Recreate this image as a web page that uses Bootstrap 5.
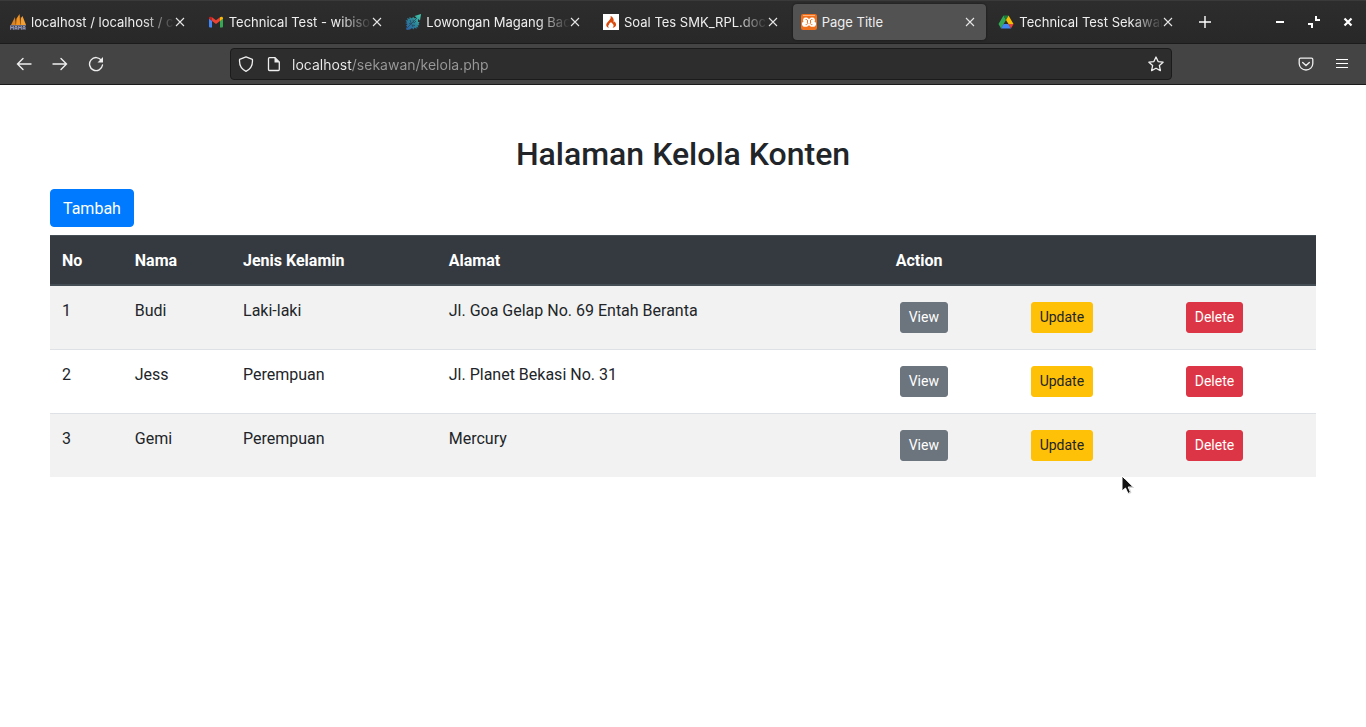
<!DOCTYPE html>
<html lang="id">
<head>
<meta charset="utf-8">
<meta name="viewport" content="width=device-width, initial-scale=1">
<title>Page Title</title>
<link href="https://cdn.jsdelivr.net/npm/bootstrap@5.3.0/dist/css/bootstrap.min.css" rel="stylesheet">
<style>
  body { font-family: Roboto, sans-serif; color: #212529; }
  .browser { font-family: Inter, sans-serif; color: #eee; }
  .browser svg { display: block; flex: none; }
  .browser button { background: none; border: 0; padding: 0; color: inherit; }

  .tab-strip { height: 44px; padding-left: 2px; background: linear-gradient(#2d2d2d, #282828); border-top: 1px solid #3a3a3a; border-bottom: 1px solid #1c1c1c; }
  .tab-list { gap: 4px; min-width: 0; }
  .browser-tab { flex: 1 1 0; min-width: 0; height: 36px; padding: 0 11px 0 8px; border-radius: 4px; }
  .browser-tab.active { background: #525252; box-shadow: 0 0 2px #111; }
  .tab-title { font-size: 13px; line-height: 20px; margin-left: 5px; color: #eee; text-decoration: none; overflow: hidden; white-space: nowrap; }
  .tab-fade { -webkit-mask-image: linear-gradient(to left, transparent, #000 32px); mask-image: linear-gradient(to left, transparent, #000 32px); }
  .strip-end { width: 182px; padding: 0 12px 0 15px; }
  .window-controls { gap: 22px; }

  .toolbar { height: 41px; background: #444; border-bottom: 1px solid #1a1a1a; }
  .nav-tools { flex: 0 0 230px; gap: 20px; padding-left: 16px; }
  .menu-tools { flex: 0 0 194px; gap: 20px; padding-right: 16px; }
  .url-bar { height: 32px; padding: 0 7px; gap: 10px; background: #2d2d2d; border: 1px solid #1b1b1b; border-radius: 4px; }
  .url-icons { gap: 12px; }
  .url-bar input { border: 0; padding: 2px 0 0; outline: 0; font-size: 14px; line-height: 20px; color: transparent;
    background: linear-gradient(to right, #eee 60px, #999 60px); -webkit-background-clip: text; background-clip: text; }

  .page-body { padding: 50px; }
  .page-heading { font-size: 32px; line-height: 38px; margin-bottom: 16px; }
  .btn { --bs-btn-border-radius: 4px; }
  .btn-sm { --bs-btn-border-radius: 3px; --bs-btn-font-size: 14px; }
  .btn-primary { --bs-btn-bg: #007bff; --bs-btn-border-color: #007bff; padding-top: 7px; padding-bottom: 5px; }
  .btn-warning { --bs-btn-color: #212529; }
  .people { table-layout: fixed; color: #212529; }
  .people > :not(caption) > * > * { padding: 13px 12px 11px; border-width: 1px 0 0; border-top: 1px solid #dee2e6; }
  .people > thead > tr > th { color: #fff; background: #343a40; border-top: 1px solid #454d55; border-bottom: 2px solid #454d55; }
  .people > tbody > tr:nth-of-type(odd) > td { --bs-table-accent-bg: #f2f2f2; color: #212529; }
  .people > tbody > tr > .act { padding: 16px 0 16px 16px; }
  .people .act .btn { display: block; width: max-content; }
  .w-no { width: 5.75%; } .w-name { width: 8.55%; } .w-sex { width: 16.25%; } .w-address { width: 35.3%; }
  .w-view { width: 10.35%; } .w-update { width: 12.25%; } .w-delete { width: 11.55%; }
  .pointer { left: 1121px; top: 475px; }
</style>
</head>
<body>
<svg class="d-none">
  <symbol id="x" viewBox="0 0 10 10"><path d="M1 1l8 8M9 1l-8 8" stroke="#e6e6e6" stroke-width="1.1"/></symbol>
</svg>

<header class="browser">
  <div class="tab-strip d-flex align-items-center">
    <nav class="tab-list d-flex flex-grow-1" aria-label="Tabs">
      <div class="browser-tab d-flex align-items-center">
        <svg width="16" height="16" viewBox="0 0 16 16"><path d="M1 11L5 3l.6 8z" fill="#d98325"/><path d="M5.200 11L6 5.500 9.500 0l1.300 11z" fill="#f29221"/><path d="M10.500 11L11 4l1.500-2L16 11z" fill="#f5a033"/><path d="M5.600 10.500L6.500 5M10.700 10.500L10 3" stroke="#8b5418" stroke-width=".7"/><path d="M.7 15.800v-3.600l1.300 2 1.300-2v3.600M5 15.800v-3.200h2v3.200M5 14.300h2M8.700 15.800v-3.600l1.300 2 1.300-2v3.600M13 15.800v-3.200h2v3.200M13 14.300h2" fill="none" stroke="#9a9fc4" stroke-width="1"/><path d="M0 11.500h16" stroke="#777b96" stroke-width=".8"/></svg>
        <a href="#" class="tab-title tab-fade flex-grow-1">localhost / localhost / crud</a>
        <button aria-label="Close tab"><svg width="10" height="10"><use href="#x"/></svg></button>
      </div>
      <div class="browser-tab d-flex align-items-center">
        <svg width="16" height="16" viewBox="0 0 16 16"><path d="M1 4.500l3 2V13.500H2a1 1 0 0 1-1-1z" fill="#4285f4"/><path d="M12 6.500l3-2v8a1 1 0 0 1-1 1h-2z" fill="#34a853"/><path d="M4 3.300l4 3 4-3v3.700l-4 3-4-3z" fill="#ea4335"/><path d="M1 4.200c0-1.600 1.700-2 3-.9V7L1 4.800z" fill="#c5221f"/><path d="M15 4.200c0-1.600-1.700-2-3-.9V7l3-2.200z" fill="#fbbc04"/></svg>
        <a href="#" class="tab-title tab-fade flex-grow-1">Technical Test - wibisono</a>
        <button aria-label="Close tab"><svg width="10" height="10"><use href="#x"/></svg></button>
      </div>
      <div class="browser-tab d-flex align-items-center">
        <svg width="16" height="16" viewBox="0 0 16 16"><defs><linearGradient id="teal" x1="1" y1="0" x2="0" y2="1"><stop offset="0" stop-color="#45d0ae"/><stop offset=".5" stop-color="#2b8599"/><stop offset="1" stop-color="#2c5aa5"/></linearGradient></defs><path d="M16 0l-1 6.500-2-1.500v3h1.500l-1 2 1 1-2 .5 1 2-2-.5V15l-2-1.500-1 2-1.500-1.500-2 1.500-3 .5-1-1 1-2.500-1-1 1.500-1.500L0 9l2-.5L.5 6 3 6.500 2 4l2.500 1V3L7 4.500 8 3l2 1.500 1.500-1L9.500 2z" fill="url(#teal)"/><path d="M2 14L12 4M5 6l1.500 4M8 5.500l.5 3M4 9.500l3 .5M7 11l3 .5M8 13l-1-2M11 7l-2 2" stroke="#28485a" stroke-width=".8"/></svg>
        <a href="#" class="tab-title tab-fade flex-grow-1">Lowongan Magang Backend</a>
        <button aria-label="Close tab"><svg width="10" height="10"><use href="#x"/></svg></button>
      </div>
      <div class="browser-tab d-flex align-items-center">
        <svg width="16" height="16" viewBox="0 0 16 16"><path fill="#fff" d="M0 0h16v16H0z"/><path d="M7.500 2c.6 2-.1 3.200-1.600 4.700C4.300 8.300 3 9.500 3.300 11.400c.2 1.200 1.200 2 2.700 2.300-1.100-1-1-2.300.1-3.200 0-.9.900-1.500 2-2.500 0 1.200 2.700 1.900 2.500 3.600 0 .8-.4 1.500-1 2.100 1.900-.3 3.600-1.600 3.500-3.300-.1-1.600-1.300-2.200-1.600-3.200-.4.500-.3.900-.5 1.300-.5-.2-.5-1-.3-1.700C10.800 4.600 9.900 3 7.500 2z" fill="#d8490b"/></svg>
        <a href="#" class="tab-title tab-fade flex-grow-1">Soal Tes SMK_RPL.docx</a>
        <button aria-label="Close tab"><svg width="10" height="10"><use href="#x"/></svg></button>
      </div>
      <div class="browser-tab active d-flex align-items-center">
        <svg width="16" height="16" viewBox="0 0 16 16"><rect width="16" height="16" rx="2" fill="#f0701c"/><path d="M2 1.500h12" stroke="#ffc193" stroke-width=".8"/><path d="M4.500 3.500h1.500l2 1.500 2-1.500h1.500a2.500 2.500 0 0 1 2 4 2.800 2.800 0 0 1-2 5.200H10l-2-1.500-2 1.500H4.500a2.800 2.800 0 0 1-2-5.200 2.500 2.500 0 0 1 2-4z" fill="#fff"/><path d="M4.600 5.500h1L7 7 6 8l1 1.200-1.400 1.500h-1M11.400 5.500h-1L9 7l1 1-1 1.200 1.400 1.500h1" fill="none" stroke="#f0701c" stroke-width="1"/></svg>
        <a href="#" class="tab-title flex-grow-1" aria-current="page">Page Title</a>
        <button aria-label="Close tab"><svg width="10" height="10"><use href="#x"/></svg></button>
      </div>
      <div class="browser-tab d-flex align-items-center">
        <svg width="16" height="16" viewBox="0 0 16 16"><path d="M5.500 1.500L.5 10l2.500 4.500L8 6z" fill="#34a853"/><path d="M5.500 1.500h5L8 6z" fill="#188038"/><path d="M10.500 1.500l5 8.500h-5L8 6z" fill="#fbbc04"/><path d="M5.500 10h5l2.500 4.500H3z" fill="#4285f4"/><path d="M10.500 10h5L13 14.500z" fill="#ea4335"/></svg>
        <a href="#" class="tab-title tab-fade flex-grow-1">Technical Test Sekawan</a>
        <button aria-label="Close tab"><svg width="10" height="10"><use href="#x"/></svg></button>
      </div>
    </nav>
    <div class="strip-end d-flex align-items-center justify-content-between flex-shrink-0">
      <button aria-label="New tab"><svg width="12" height="12" viewBox="0 0 12 12"><path d="M6 0v12M0 6h12" stroke="#fff" stroke-width="1.400"/></svg></button>
      <div class="window-controls d-flex align-items-center">
        <button aria-label="Minimize"><svg width="12" height="12" viewBox="0 0 12 12"><path d="M2 6h8" stroke="#fff" stroke-width="2"/></svg></button>
        <button aria-label="Restore"><svg width="12" height="12" viewBox="0 0 12 12"><path d="M8 0v4h4M0 8h4v4" fill="none" stroke="#fff" stroke-width="2"/></svg></button>
        <button aria-label="Close window"><svg width="12" height="12" viewBox="0 0 12 12"><path d="M2.500 2.500l7 7M9.500 2.500l-7 7" stroke="#fff" stroke-width="2.200"/></svg></button>
      </div>
    </div>
  </div>

  <div class="toolbar d-flex align-items-center">
    <div class="nav-tools d-flex align-items-center">
      <button aria-label="Back"><svg width="16" height="16" viewBox="0 0 16 16"><path d="M15 8H1.500M7 2.500L1.500 8 7 13.500" fill="none" stroke="#eee" stroke-width="1.400" stroke-linecap="round"/></svg></button>
      <button aria-label="Forward"><svg width="16" height="16" viewBox="0 0 16 16"><path d="M1 8h13.500M9 2.500L14.500 8 9 13.500" fill="none" stroke="#eee" stroke-width="1.400" stroke-linecap="round"/></svg></button>
      <button aria-label="Reload"><svg width="16" height="16" viewBox="0 0 16 16"><path d="M13.500 4.500A6.500 6.500 0 1 0 14.500 9" fill="none" stroke="#eee" stroke-width="1.400" stroke-linecap="round"/><path d="M15 1v5.500H9.500z" fill="#eee"/></svg></button>
    </div>
    <div class="url-bar d-flex align-items-center flex-grow-1">
      <div class="url-icons d-flex">
        <svg width="16" height="16" viewBox="0 0 16 16"><path d="M8 .8l6.400 2.500c.5 5-1.400 9.700-6.400 12-5-2.300-6.900-7-6.400-12z" fill="none" stroke="#eee" stroke-width="1.300" stroke-linejoin="round"/></svg>
        <svg width="16" height="16" viewBox="0 0 16 16"><path d="M3.500 1.700H9l4.300 4.300v7.500a1 1 0 0 1-1 1h-8.800a1 1 0 0 1-1-1V2.700a1 1 0 0 1 1-1z" fill="none" stroke="#eee" stroke-width="1.300"/><path d="M8.500 1.500v5h5z" fill="#eee"/></svg>
      </div>
      <input type="text" class="flex-grow-1" aria-label="Address" value="localhost/sekawan/kelola.php">
      <button aria-label="Bookmark"><svg width="16" height="16" viewBox="0 0 16 16"><path d="M8 1l2.100 4.600 5 .6-3.700 3.400 1 5L8 12.200l-4.400 2.400 1-5L.9 6.200l5-.6z" fill="none" stroke="#eee" stroke-width="1.300" stroke-linejoin="round"/></svg></button>
    </div>
    <div class="menu-tools d-flex align-items-center justify-content-end">
      <button aria-label="Pocket"><svg width="16" height="16" viewBox="0 0 16 16"><path d="M2.500 2.200h11a1.300 1.300 0 0 1 1.300 1.300v4a6.800 6.500 0 0 1-13.600 0v-4a1.300 1.300 0 0 1 1.300-1.300z" fill="none" stroke="#eee" stroke-width="1.300"/><path d="M4.700 6.500L8 9.500l3.300-3" fill="none" stroke="#eee" stroke-width="1.400" stroke-linecap="round"/></svg></button>
      <button aria-label="Menu"><svg width="16" height="16" viewBox="0 0 16 16"><path d="M2 3.500h12M2 7.500h12M2 11.500h12" stroke="#fff" stroke-width="1.200"/></svg></button>
    </div>
  </div>
</header>

<main class="page-body">
  <h1 class="page-heading text-center">Halaman Kelola Konten</h1>
  <a href="#" class="btn btn-primary mb-2">Tambah</a>
  <table class="table people mb-0">
    <colgroup><col class="w-no"><col class="w-name"><col class="w-sex"><col class="w-address"><col class="w-view"><col class="w-update"><col class="w-delete"></colgroup>
    <thead>
      <tr><th>No</th><th>Nama</th><th>Jenis Kelamin</th><th>Alamat</th><th colspan="3">Action</th></tr>
    </thead>
    <tbody>
      <tr>
        <td>1</td><td>Budi</td><td>Laki-laki</td><td>Jl. Goa Gelap No. 69 Entah Beranta</td>
        <td class="act"><button class="btn btn-sm btn-secondary">View</button></td>
        <td class="act"><button class="btn btn-sm btn-warning">Update</button></td>
        <td class="act"><button class="btn btn-sm btn-danger">Delete</button></td>
      </tr>
      <tr>
        <td>2</td><td>Jess</td><td>Perempuan</td><td>Jl. Planet Bekasi No. 31</td>
        <td class="act"><button class="btn btn-sm btn-secondary">View</button></td>
        <td class="act"><button class="btn btn-sm btn-warning">Update</button></td>
        <td class="act"><button class="btn btn-sm btn-danger">Delete</button></td>
      </tr>
      <tr>
        <td>3</td><td>Gemi</td><td>Perempuan</td><td>Mercury</td>
        <td class="act"><button class="btn btn-sm btn-secondary">View</button></td>
        <td class="act"><button class="btn btn-sm btn-warning">Update</button></td>
        <td class="act"><button class="btn btn-sm btn-danger">Delete</button></td>
      </tr>
    </tbody>
  </table>
</main>

<svg class="pointer position-absolute" width="13" height="20" viewBox="0 0 13 20" aria-hidden="true"><path d="M1 1v15l3.500-3 2.500 5.500 2.500-1.200L7.200 12H12z" fill="#111" stroke="#fff" stroke-width="1"/><path d="M7.500 18.800l2.500-1.200L8 12.500h4.500L4 4" fill="none" stroke="#bbb" stroke-width=".6"/></svg>
<script src="https://cdn.jsdelivr.net/npm/bootstrap@5.3.0/dist/js/bootstrap.bundle.min.js"></script>
</body>
</html>
